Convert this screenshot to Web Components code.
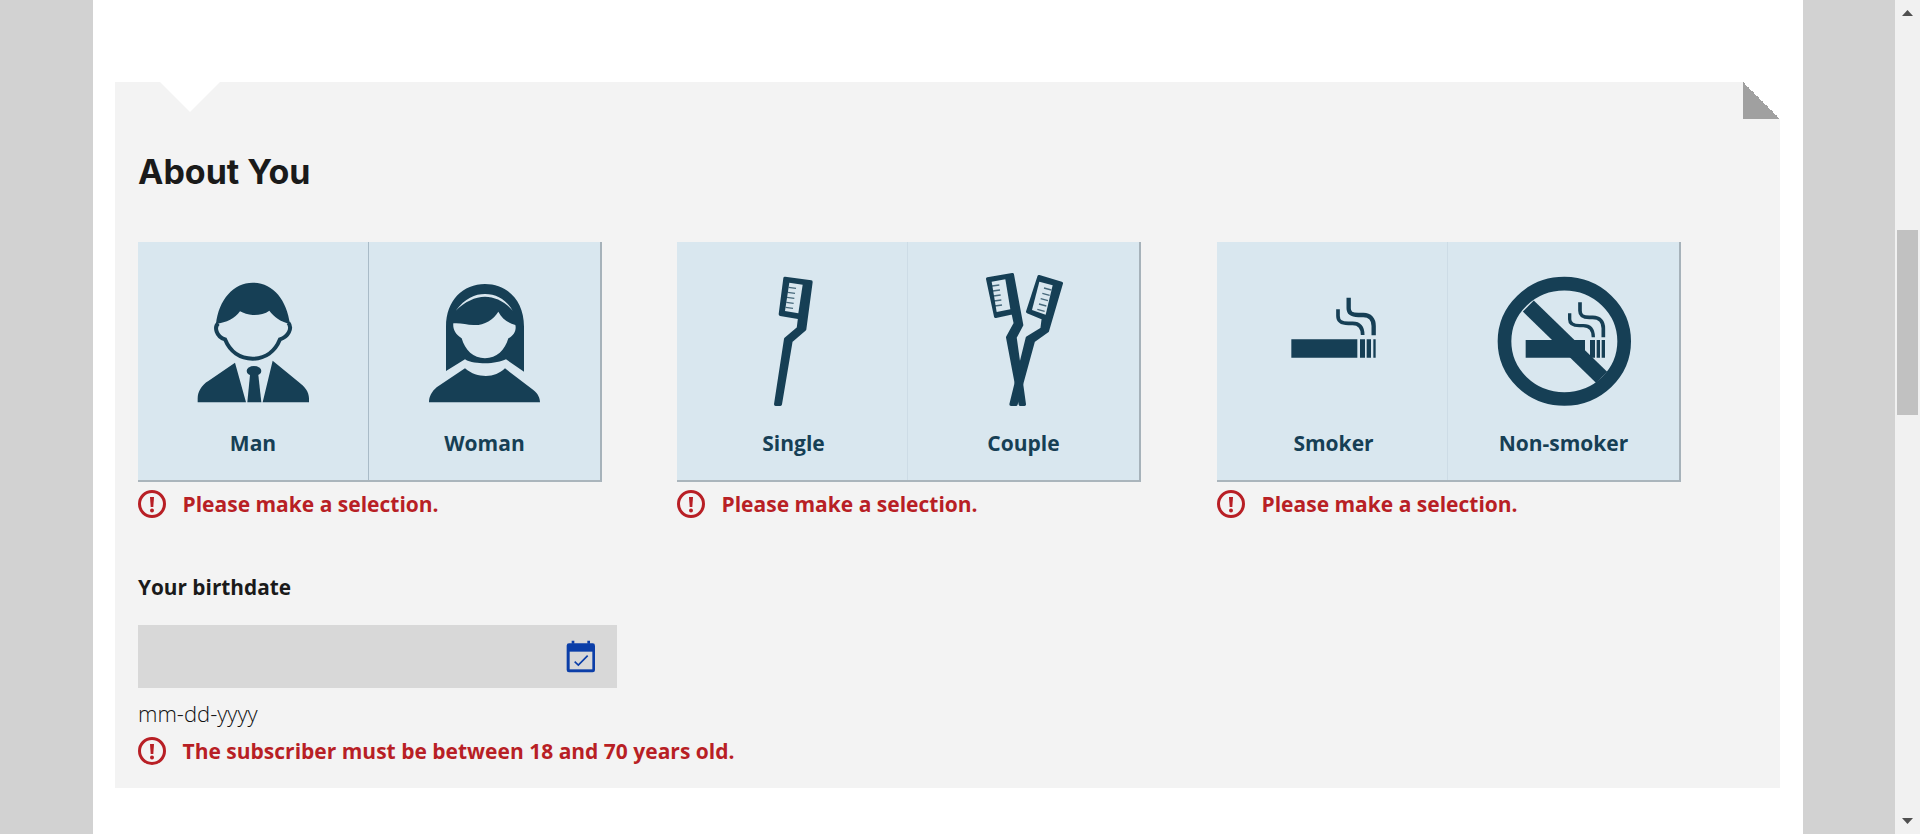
<!DOCTYPE html>
<html lang="en">
<head>
<meta charset="utf-8">
<title>About You</title>
<style>
  html, body { margin: 0; height: 100%; overflow: hidden; }
  body { font-family: "Open Sans", "Liberation Sans", sans-serif; }
</style>
</head>
<body>
<app-page>
  <form-panel heading="About You">
    <toggle-row>
      <toggle-group>
        <toggle-option label="Man">
          <svg viewBox="-126 -30 690 480" fill="#163f55">
            <path d="M108 162C116 90 160 38 218 38C280 38 320 90 330 162C300 155 282 140 268 122C255 132 235 136 218 135C205 134 190 130 180 124C165 145 140 158 108 162Z"/>
            <path d="M115 160C102 170 108 200 135 208C150 245 180 266 218 266C255 266 285 245 300 208C325 200 338 175 325 158" fill="none" stroke="#163f55" stroke-width="12"/>
            <path d="M165 278L198 397H53V385C53 365 65 345 85 333Z"/>
            <path d="M278 272L248 397H387V385C387 365 375 350 355 335Z"/>
            <ellipse cx="222" cy="303" rx="22" ry="15"/>
            <path d="M210 315H235L244 397H202Z"/>
          </svg>
        </toggle-option>
        <toggle-option label="Woman">
          <svg viewBox="-123 -30 693 480" fill="#163f55">
            <path fill-rule="evenodd" d="M108 303V170C108 90 160 42 225 42C290 42 342 90 342 170V305L288 268C275 275 250 280 225 280C205 280 180 278 165 268ZM130 160C128 175 135 192 155 205C165 240 190 265 225 265C260 265 285 240 295 205C312 198 320 180 316 165C295 160 275 145 265 125C250 150 220 167 190 165C170 164 150 158 130 160Z"/>
            <path d="M165 295C185 312 205 318 228 318C250 318 270 310 285 295L370 360C385 372 390 385 390 397H57C57 380 65 365 80 352Z"/>
            <path d="M137 122C165 85 195 72 225 72C260 72 290 90 308 122C285 95 255 80 225 80C195 80 165 95 137 122Z" fill="#d9e7ef"/>
          </svg>
        </toggle-option>
      </toggle-group>
      <error-note>Please make a selection.</error-note>

      <toggle-group light>
        <toggle-option label="Single">
          <svg viewBox="-219 0 690 480" fill="#163f55">
            <path d="M105 55L183 66L164 208L123 243L91 433H77L107 237L145 205L149 173L91 163Z" stroke="#163f55" stroke-width="10" stroke-linejoin="round"/>
            <path d="M118 68L158 74L145 160L105 153Z" fill="#d9e7ef"/>
            <path d="M116 82l22 3M113 97l22 3M111 112l22 3M109 127l22 3M107 142l22 3" stroke="#163f55" stroke-width="4" opacity=".75"/>
          </svg>
        </toggle-option>
        <toggle-option label="Couple">
          <svg viewBox="474 0 693 480" fill="#163f55">
            <path d="M713 57L787 44L815 195L795 232L823 433H811L773 232L796 190L789 158L737 169Z" stroke="#163f55" stroke-width="10" stroke-linejoin="round"/>
            <path d="M867 50L934 70L892 213L850 243L798 433H783L832 234L876 207L880 175L833 155Z" stroke="#163f55" stroke-width="10" stroke-linejoin="round"/>
            <path d="M725 65L766 58L781 148L740 156Z" fill="#d9e7ef"/>
            <path d="M868 65L908 76L887 164L846 150Z" fill="#d9e7ef"/>
            <path d="M726 78l22-3M728 93l22-3M730 108l22-3M732 123l22-3M734 138l22-3" stroke="#163f55" stroke-width="4" opacity=".75"/>
            <path d="M904 90l-22-6M899 106l-22-6M894 122l-22-6M889 138l-22-6M884 154l-22-6" stroke="#163f55" stroke-width="4" opacity=".75"/>
          </svg>
        </toggle-option>
      </toggle-group>
      <error-note>Please make a selection.</error-note>

      <toggle-group light>
        <toggle-option label="Smoker">
          <svg viewBox="-159 0 690 480" fill="#163f55">
            <path d="M64 238H262V293H64ZM270 238H285V293H270ZM290 238H303V293H290ZM310 238H317V293H310Z"/>
            <path d="M236 113V145C236 160 245 165 265 165H280C300 165 311 178 311 198V226" fill="none" stroke="#163f55" stroke-width="13"/>
            <path d="M204 148V168C204 185 215 190 235 190H248C268 190 278 202 278 225" fill="none" stroke="#163f55" stroke-width="11"/>
          </svg>
        </toggle-option>
        <toggle-option label="Non-smoker">
          <svg viewBox="534 0 693 480" fill="#163f55">
            <ellipse cx="883" cy="244" rx="179.5" ry="173" fill="none" stroke="#163f55" stroke-width="41"/>
            <path d="M775 138L995 352" fill="none" stroke="#163f55" stroke-width="47"/>
            <path d="M767 240H945V293H767ZM960 240H975V293H960ZM980 240H990V293H980ZM995 240H1005V293H995Z"/>
            <path d="M930 127V152C930 168 940 172 958 172H968C990 172 1000 186 1000 205V232" fill="none" stroke="#163f55" stroke-width="11"/>
            <path d="M899 160V178C899 192 910 197 928 197H940C960 197 970 210 970 232" fill="none" stroke="#163f55" stroke-width="10"/>
          </svg>
        </toggle-option>
      </toggle-group>
      <error-note>Please make a selection.</error-note>
    </toggle-row>

    <date-field label="Your birthdate" hint="mm-dd-yyyy"></date-field>
    <error-note>The subscriber must be between 18 and 70 years old.</error-note>
  </form-panel>
</app-page>

<script>
const pageTemplate = document.createElement('template')
pageTemplate.innerHTML = `
  <style>
    :host {
      display: grid;
      grid-template-columns: 93px 1710px 92px 25px;
      height: 834px;
      background: #d2d2d2;
    }
    main {
      grid-column: 2;
      background: #fff;
      padding: 82px 23px 0 22px;
    }
    fake-scrollbar { grid-column: 4; }
  </style>
  <main><slot></slot></main>
  <fake-scrollbar></fake-scrollbar>
`

customElements.define('app-page',
  /**
   * Grey backdrop, white page column and the window scrollbar.
   */
  class extends HTMLElement {
    constructor () {
      super()
      this.attachShadow({ mode: 'open' })
        .appendChild(pageTemplate.content.cloneNode(true))
    }
  }
)

const scrollbarTemplate = document.createElement('template')
scrollbarTemplate.innerHTML = `
  <style>
    :host {
      display: flex;
      flex-direction: column;
      align-items: center;
      height: 834px;
      background: #f1f1f1;
    }
    svg { display: block; flex: none; }
    .up { margin-top: 10px; }
    .thumb {
      width: 21px;
      height: 185px;
      margin-top: 214px;
      background: #c1c1c1;
    }
    .down { margin-top: auto; margin-bottom: 10px; }
  </style>
  <svg class="up" width="11" height="6" viewBox="0 0 11 6"><path d="M5.5 0L11 6H0Z" fill="#505050"/></svg>
  <div class="thumb"></div>
  <svg class="down" width="11" height="6" viewBox="0 0 11 6"><path d="M0 0H11L5.5 6Z" fill="#505050"/></svg>
`

customElements.define('fake-scrollbar',
  class extends HTMLElement {
    constructor () {
      super()
      this.attachShadow({ mode: 'open' })
        .appendChild(scrollbarTemplate.content.cloneNode(true))
    }
  }
)

const panelTemplate = document.createElement('template')
panelTemplate.innerHTML = `
  <style>
    :host {
      display: block;
      position: relative;
      background: #f3f3f3;
      padding: 0 0 23px 23px;
    }
    .notch {
      position: absolute;
      left: 45px;
      top: 0;
      width: 60px;
      height: 30px;
      background: #fff;
      clip-path: polygon(0 0, 100% 0, 50% 100%);
    }
    .fold {
      position: absolute;
      right: 0;
      top: 0;
      width: 37px;
      height: 37px;
      background: linear-gradient(to top right, #a0a0a0 50%, #fff 50%);
    }
    h2 {
      margin: 0;
      padding-top: 70px;
      height: 160px;
      box-sizing: border-box;
      font: 700 34px/40px Inter, "Liberation Sans", sans-serif;
      color: #1a1a1a;
    }
    .notch, .fold { pointer-events: none; }
  </style>
  <div class="notch"></div>
  <div class="fold"></div>
  <h2></h2>
  <slot></slot>
`

customElements.define('form-panel',
  /**
   * Grey form section with the notch on top and the folded corner.
   */
  class extends HTMLElement {
    constructor () {
      super()
      this.attachShadow({ mode: 'open' })
        .appendChild(panelTemplate.content.cloneNode(true))
    }

    connectedCallback () {
      this.shadowRoot.querySelector('h2').textContent = this.getAttribute('heading')
    }
  }
)

const rowTemplate = document.createElement('template')
rowTemplate.innerHTML = `
  <style>
    :host {
      display: grid;
      grid-template-columns: 539px 540px 464px;
      grid-auto-flow: column;
      grid-template-rows: 240px 28px;
      row-gap: 8px;
      margin-bottom: 55px;
    }
  </style>
  <slot></slot>
`

customElements.define('toggle-row',
  class extends HTMLElement {
    constructor () {
      super()
      this.attachShadow({ mode: 'open' })
        .appendChild(rowTemplate.content.cloneNode(true))
    }
  }
)

const groupTemplate = document.createElement('template')
groupTemplate.innerHTML = `
  <style>
    :host {
      display: flex;
      box-sizing: border-box;
      width: 464px;
      height: 240px;
      background: #d9e7ef;
      border-right: 2px solid #a6b2ba;
      border-bottom: 2px solid #aab5bc;
      --divider: #a9bbc7;
    }
    :host([light]) { --divider: #cddce6; --label-nudge: 3px; }
  </style>
  <slot></slot>
`

customElements.define('toggle-group',
  class extends HTMLElement {
    constructor () {
      super()
      this.attachShadow({ mode: 'open' })
        .appendChild(groupTemplate.content.cloneNode(true))
    }
  }
)

const optionTemplate = document.createElement('template')
optionTemplate.innerHTML = `
  <style>
    :host {
      display: flex;
      flex: 1 1 0;
      min-width: 0;
      flex-direction: column;
      align-items: center;
      padding-top: 18px;
      font: 700 21px/28px "Open Sans", "Liberation Sans", sans-serif;
      color: #163f55;
    }
    :host(:first-child) {
      flex: none;
      box-sizing: border-box;
      width: 231px;
      border-right: 1px solid var(--divider);
    }
    :host(:first-child) .label { padding-left: var(--label-nudge, 0); }
    ::slotted(svg) { display: block; width: 100%; height: 160px; }
    .label { margin-top: 9px; }
  </style>
  <slot></slot>
  <div class="label"></div>
`

customElements.define('toggle-option',
  /**
   * One half of a toggle: an icon passed in by slot and a label.
   */
  class extends HTMLElement {
    constructor () {
      super()
      this.attachShadow({ mode: 'open' })
        .appendChild(optionTemplate.content.cloneNode(true))
    }

    connectedCallback () {
      this.shadowRoot.querySelector('.label').textContent = this.getAttribute('label')
    }
  }
)

const errorTemplate = document.createElement('template')
errorTemplate.innerHTML = `
  <style>
    :host {
      display: flex;
      align-items: center;
      gap: 16.5px;
      height: 28px;
      font: 700 21px/28px "Open Sans", "Liberation Sans", sans-serif;
      color: #b81f25;
    }
    svg { display: block; flex: none; }
  </style>
  <svg width="28" height="28" viewBox="0 0 28 28">
    <circle cx="14" cy="14" r="12.5" fill="none" stroke="#b81f25" stroke-width="3"/>
    <path d="M12 7h4l-.7 10h-2.6Z" fill="#b81f25"/>
    <circle cx="14" cy="20.5" r="2" fill="#b81f25"/>
  </svg>
  <span><slot></slot></span>
`

customElements.define('error-note',
  class extends HTMLElement {
    constructor () {
      super()
      this.attachShadow({ mode: 'open' })
        .appendChild(errorTemplate.content.cloneNode(true))
    }
  }
)

const dateTemplate = document.createElement('template')
dateTemplate.innerHTML = `
  <style>
    :host {
      display: block;
      font: 20.8px/28px "Open Sans", "Liberation Sans", sans-serif;
      margin-bottom: 10px;
    }
    label { display: block; font-weight: 700; color: #1a1a1a; }
    .box {
      display: flex;
      align-items: center;
      justify-content: flex-end;
      box-sizing: border-box;
      width: 479px;
      height: 63px;
      margin-top: 24px;
      padding-right: 21px;
      background: #d8d8d8;
    }
    input {
      flex: 1;
      min-width: 0;
      border: 0;
      background: none;
      outline: 0;
    }
    svg { display: block; flex: none; }
    .hint { margin-top: 11px; font-size: 22px; font-weight: 300; color: #111; }
  </style>
  <label></label>
  <div class="box">
    <input type="text" aria-label="birthdate">
    <svg width="30" height="33" viewBox="78 45 90 99">
      <path d="M95 47h8v9h-8ZM142 47h8v9h-8Z" fill="#0b3ea8"/>
      <rect x="80" y="55" width="85" height="87" rx="7" fill="#0b3ea8"/>
      <rect x="89" y="80" width="68" height="53" fill="#d8d8d8"/>
      <path d="M104 110L115 120L143 92" fill="none" stroke="#0b3ea8" stroke-width="5"/>
    </svg>
  </div>
  <div class="hint"></div>
`

customElements.define('date-field',
  class extends HTMLElement {
    constructor () {
      super()
      this.attachShadow({ mode: 'open' })
        .appendChild(dateTemplate.content.cloneNode(true))
    }

    connectedCallback () {
      this.shadowRoot.querySelector('label').textContent = this.getAttribute('label')
      this.shadowRoot.querySelector('.hint').textContent = this.getAttribute('hint')
    }
  }
)
</script>
</body>
</html>
